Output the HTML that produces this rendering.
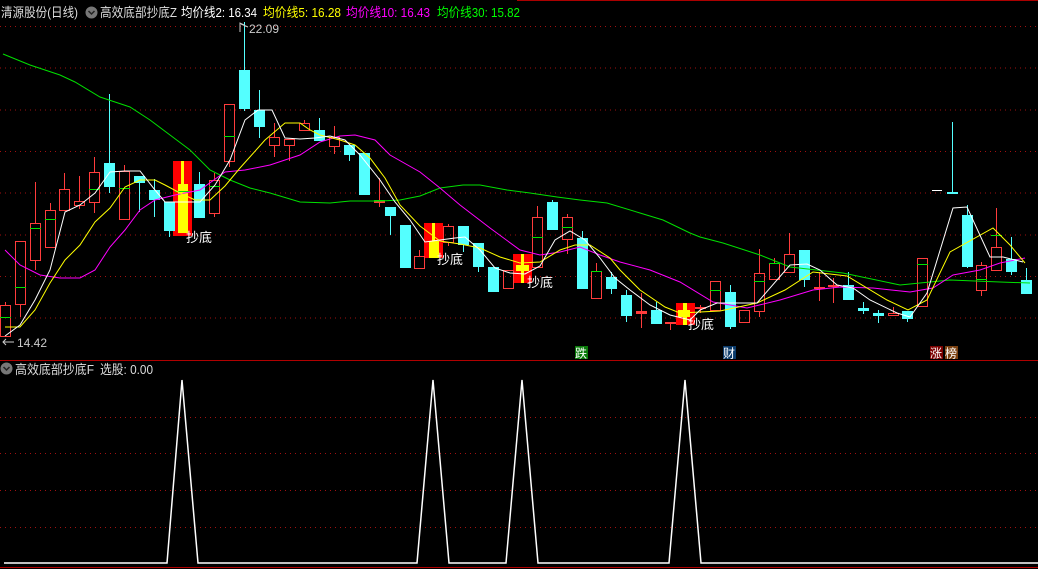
<!DOCTYPE html>
<html><head><meta charset="utf-8"><style>
html,body{margin:0;padding:0;background:#000;width:1038px;height:569px;overflow:hidden}
svg{display:block}
text{font-family:"Liberation Sans","Noto Sans CJK SC",sans-serif}
</style></head><body>
<svg id="s" width="1038" height="569" xmlns="http://www.w3.org/2000/svg">
<rect width="1038" height="569" fill="#000"/>
<line x1="517" y1="0.5" x2="1038" y2="0.5" stroke="#a00" />
<g id="grid" stroke="#a01010" stroke-dasharray="1,4"></g>
<line x1="0" y1="360.5" x2="1038" y2="360.5" stroke="#b00000"/>
<line x1="0" y1="567.5" x2="1038" y2="567.5" stroke="#b00000"/>
<g id="sig"></g>
<g id="cand"></g>
<polyline fill="none" stroke="#00e000" points="3,54 30,65 60,75 75,82 100,97 130,107 150,120 170,135 190,150 210,170 230,180 250,188 270,193 300,202 330,203 350,201 380,201 400,200 420,196 440,188 463,185 480,185 507,190 530,193 557,197 580,200 607,203 640,213 663,220 690,233 700,237 723,243 760,255 790,267 843,273 900,285 950,280 1000,282 1030,283"/>
<polyline fill="none" stroke="#ff00ff" points="5,250 20,265 40,275 60,278 80,278 95,270 110,247 125,230 140,210 155,200 175,195 200,190 225,172 245,170 270,165 300,155 320,142 340,136 355,135 375,140 390,155 420,172 440,188 460,205 490,228 520,250 540,255 560,252 580,247 600,255 620,262 650,270 680,282 713,302 747,308 780,300 813,290 840,287 873,288 910,292 933,288 953,275 980,270 1000,263 1025,258"/>
<polyline fill="none" stroke="#ffff00" points="5,327 20,327 35,310 50,283 65,260 80,245 95,222 110,208 125,187 140,180 155,180 165,185 180,193 195,200 210,200 225,186 240,168 265,140 285,123 300,123 310,130 320,135 340,140 355,145 370,158 385,178 400,205 420,226 440,241 460,244 480,248 500,257 520,263 540,262 560,250 575,245 590,245 610,258 620,270 640,290 665,307 680,313 720,311 757,303 785,290 813,272 847,276 887,300 908,310 927,300 950,252 993,228 1010,245 1025,263"/>
<polyline fill="none" stroke="#ffffff" points="5,336 20,325 35,300 50,270 65,212 80,205 95,193 110,172 125,171 140,171 155,190 165,202 185,202 200,202 215,185 230,160 245,120 258,110 272,110 285,138 300,139 315,138 330,136 345,140 360,155 380,180 395,202 410,220 425,242 440,240 455,238 465,237 480,250 495,268 510,273 525,274 540,266 555,240 570,231 585,240 600,258 615,278 630,290 650,305 670,315 690,320 700,310 717,303 757,303 790,265 807,264 820,270 837,285 853,288 870,300 897,313 910,317 927,293 953,208 967,207 990,257 1003,257 1023,262"/>
<line x1="932" y1="190.5" x2="942" y2="190.5" stroke="#fff"/>
<g fill="#fff" font-size="13">
<text x="186" y="242">抄底</text>
<text x="437" y="264">抄底</text>
<text x="527" y="287">抄底</text>
<text x="688" y="329">抄底</text>
</g>
<polyline fill="none" stroke="#ccc" points="240,32 240,23 244,25"/>
<line x1="241" y1="24" x2="248" y2="27" stroke="#ccc"/>
<text x="249" y="33" fill="#ccc" font-size="12">22.09</text>
<polyline fill="none" stroke="#ccc" points="6,339 3,342 6,345"/><line x1="3" y1="342" x2="14" y2="342" stroke="#ccc"/>
<text x="17" y="347" fill="#ccc" font-size="12">14.42</text>
<rect x="575" y="346" width="13" height="13" fill="#0a7a0a"/><text x="575" y="357.5" fill="#fff" font-size="12">跌</text>
<rect x="723" y="346" width="13" height="13" fill="#0a3a6a"/><text x="723" y="357.5" fill="#fff" font-size="12">财</text>
<rect x="930" y="346" width="13" height="13" fill="#7a0000"/><text x="930" y="357.5" fill="#fff" font-size="12">涨</text>
<rect x="945" y="346" width="13" height="13" fill="#7a4010"/><text x="945" y="357.5" fill="#fff" font-size="12">榜</text>
<!-- header -->
<g font-size="13">
<text x="1" y="17" fill="#ddd" textLength="77" lengthAdjust="spacingAndGlyphs">清源股份(日线)</text>
<circle cx="91.5" cy="12.5" r="6" fill="#777"/><polyline points="88.5,11 91.5,14 94.5,11" fill="none" stroke="#222" stroke-width="1.5"/>
<text x="100" y="17" fill="#ddd" textLength="77" lengthAdjust="spacingAndGlyphs">高效底部抄底Z</text>
<text x="181" y="17" fill="#fff" textLength="76" lengthAdjust="spacingAndGlyphs">均价线2: 16.34</text>
<text x="263" y="17" fill="#ffff00" textLength="78" lengthAdjust="spacingAndGlyphs">均价线5: 16.28</text>
<text x="346" y="17" fill="#ff00ff" textLength="84" lengthAdjust="spacingAndGlyphs">均价线10: 16.43</text>
<text x="437" y="17" fill="#00ff00" textLength="83" lengthAdjust="spacingAndGlyphs">均价线30: 15.82</text>
<circle cx="6.5" cy="368.5" r="6" fill="#777"/><polyline points="3.5,367 6.5,370 9.5,367" fill="none" stroke="#222" stroke-width="1.5"/>
<text x="15" y="374" fill="#ddd" textLength="79" lengthAdjust="spacingAndGlyphs">高效底部抄底F</text>
<text x="100" y="374" fill="#ddd" textLength="53" lengthAdjust="spacingAndGlyphs">选股: 0.00</text>
</g>
<polyline fill="none" stroke="#fff" stroke-width="1.5" points="4,563 167,563 182,380 198,563 417,563 433,380 449,563 506,563 522,380 538,563 669,563 685,380 701,563 1038,563"/>
</svg>
<script>
var NS="http://www.w3.org/2000/svg",s=document.getElementById('s');
function el(p,t,a){var e=document.createElementNS(NS,t);for(var k in a)e.setAttribute(k,a[k]);p.appendChild(e);return e;}
var g=document.getElementById('grid');
[26,67.5,109.5,151,192.5,234.5,276,317.5,417,453,490,527].forEach(function(y){el(g,'line',{x1:0,x2:1038,y1:y+.5,y2:y+.5});});
var sg=document.getElementById('sig');
[[173,161,192,236],[424,223,443,258],[513,254,532,283],[676,303,695,325]].forEach(function(a){el(sg,'rect',{x:a[0],y:a[1],width:a[2]-a[0],height:a[3]-a[1],fill:'#ff0000'});});
el(sg,'rect',{x:181,y:161,width:3,height:72,fill:'#ffff00'});
el(sg,'rect',{x:178,y:184,width:10,height:49,fill:'#ffff00'});
el(sg,'rect',{x:432,y:223,width:3,height:35,fill:'#ffff00'});
el(sg,'rect',{x:429,y:241,width:10,height:17,fill:'#ffff00'});
el(sg,'rect',{x:521,y:254,width:3,height:29,fill:'#ffff00'});
el(sg,'rect',{x:516,y:265,width:13,height:6,fill:'#ffff00'});
el(sg,'rect',{x:683,y:303,width:4,height:22,fill:'#ffff00'});
el(sg,'rect',{x:678,y:310,width:12,height:7,fill:'#ffff00'});
el(sg,'line',{x1:175,x2:190,y1:191.5,y2:191.5,stroke:'#00e000'});
var C=[[5,305,337,302,337,'r',317],[19.5,241,305,241,317,'r',287],[34.5,223,261,182,270,'r',228],[49.5,210,248,203,248,'r',219],[64,189,211,173,211,'r'],[79,201,206,176,209,'r'],[94,172,203,157,213,'r',189],[109,163,187,94,193,'c'],[124,171,220,165,220,'r',188],[139,176,183,176,212,'c'],[154,190,200,179,217,'c'],[169,202,231,202,237,'c'],
[199,184,218,172,218,'c'],[214,180,214,173,217,'r',186],[229,104,162,104,167,'r',136],[244,70,109,22,111,'c'],[259,110,127,90,138,'c'],[274,137,146,123,157,'r'],[289,139,146,139,161,'r'],[304,123,131,120,131,'r'],[319,130,141,118,141,'c'],[334,137,147,126,154,'r'],[349,145,155,145,161,'c'],[364,153,195,153,195,'c'],[379,201,203,178,207,'r',200],[389.5,207,216,207,235,'c'],[404.5,225,268,225,268,'c'],[419,256,269,250,269,'r'],[448,226,243,224,246,'r'],[463,226,245,226,252,'c'],[478,243,267,243,272,'c'],[493,267,292,267,292,'c'],[508,270,289,270,289,'r'],[537,217,268,206,268,'r',237],[552,202,230,200,230,'c'],[567,217,240,214,254,'r',227],[582,238,289,231,289,'c'],[596,271,299,263,299,'r',271],[611,277,289,272,294,'c'],[626,295,316,290,322,'c'],[641,311,314,293,328,'rf'],[656,310,324,302,324,'c'],[670,322,324,322,330,'r'],[700,307,309,305,313,'r'],[715,281,311,281,311,'r',290],[730,292,327,285,329,'c'],[744,310,323,310,323,'r'],[759,273,312,249,317,'r',281],[774,263,280,258,280,'r',263],[789,254,273,233,273,'r'],[804,250,280,250,287,'c'],[819,287,289,272,301,'rf'],[833,285,287,278,303,'rf'],[848,285,300,272,300,'c'],[863,308,311,302,314,'c'],[878,313,316,310,323,'c'],[893,313,316,307,316,'r'],[907,311,319,311,322,'c'],[922,258,307,258,307,'r',264],[952,192,194,122,194,'c'],[967,215,267,205,268,'c'],[981,265,291,262,296,'r',279],[996,247,271,208,271,'r',235],[1011,259,272,237,275,'c'],[1026,280,294,268,294,'c']];
var cg=document.getElementById('cand');
C.forEach(function(c){var x=c[0],t=c[1],b=c[2],col=c[5]=='c'?'#54ffff':'#ff3c3c';
 var wx=Math.round(x)+.5;
 el(cg,'line',{x1:wx,x2:wx,y1:c[3],y2:t,stroke:col});
 el(cg,'line',{x1:wx,x2:wx,y1:b,y2:c[4],stroke:col});
 if(c[5]=='c'||c[5]=='rf'){el(cg,'rect',{x:Math.round(x)-5,y:t,width:11,height:Math.max(b-t,2),fill:col});}
 else{el(cg,'rect',{x:Math.round(x)-4.5,y:t+.5,width:10,height:Math.max(b-t-1,1),fill:'none',stroke:col});}
 if(c[6])el(cg,'line',{x1:Math.round(x)-5,x2:Math.round(x)+6,y1:c[6]+.5,y2:c[6]+.5,stroke:'#00e000'});
});
</script>
</body></html>
